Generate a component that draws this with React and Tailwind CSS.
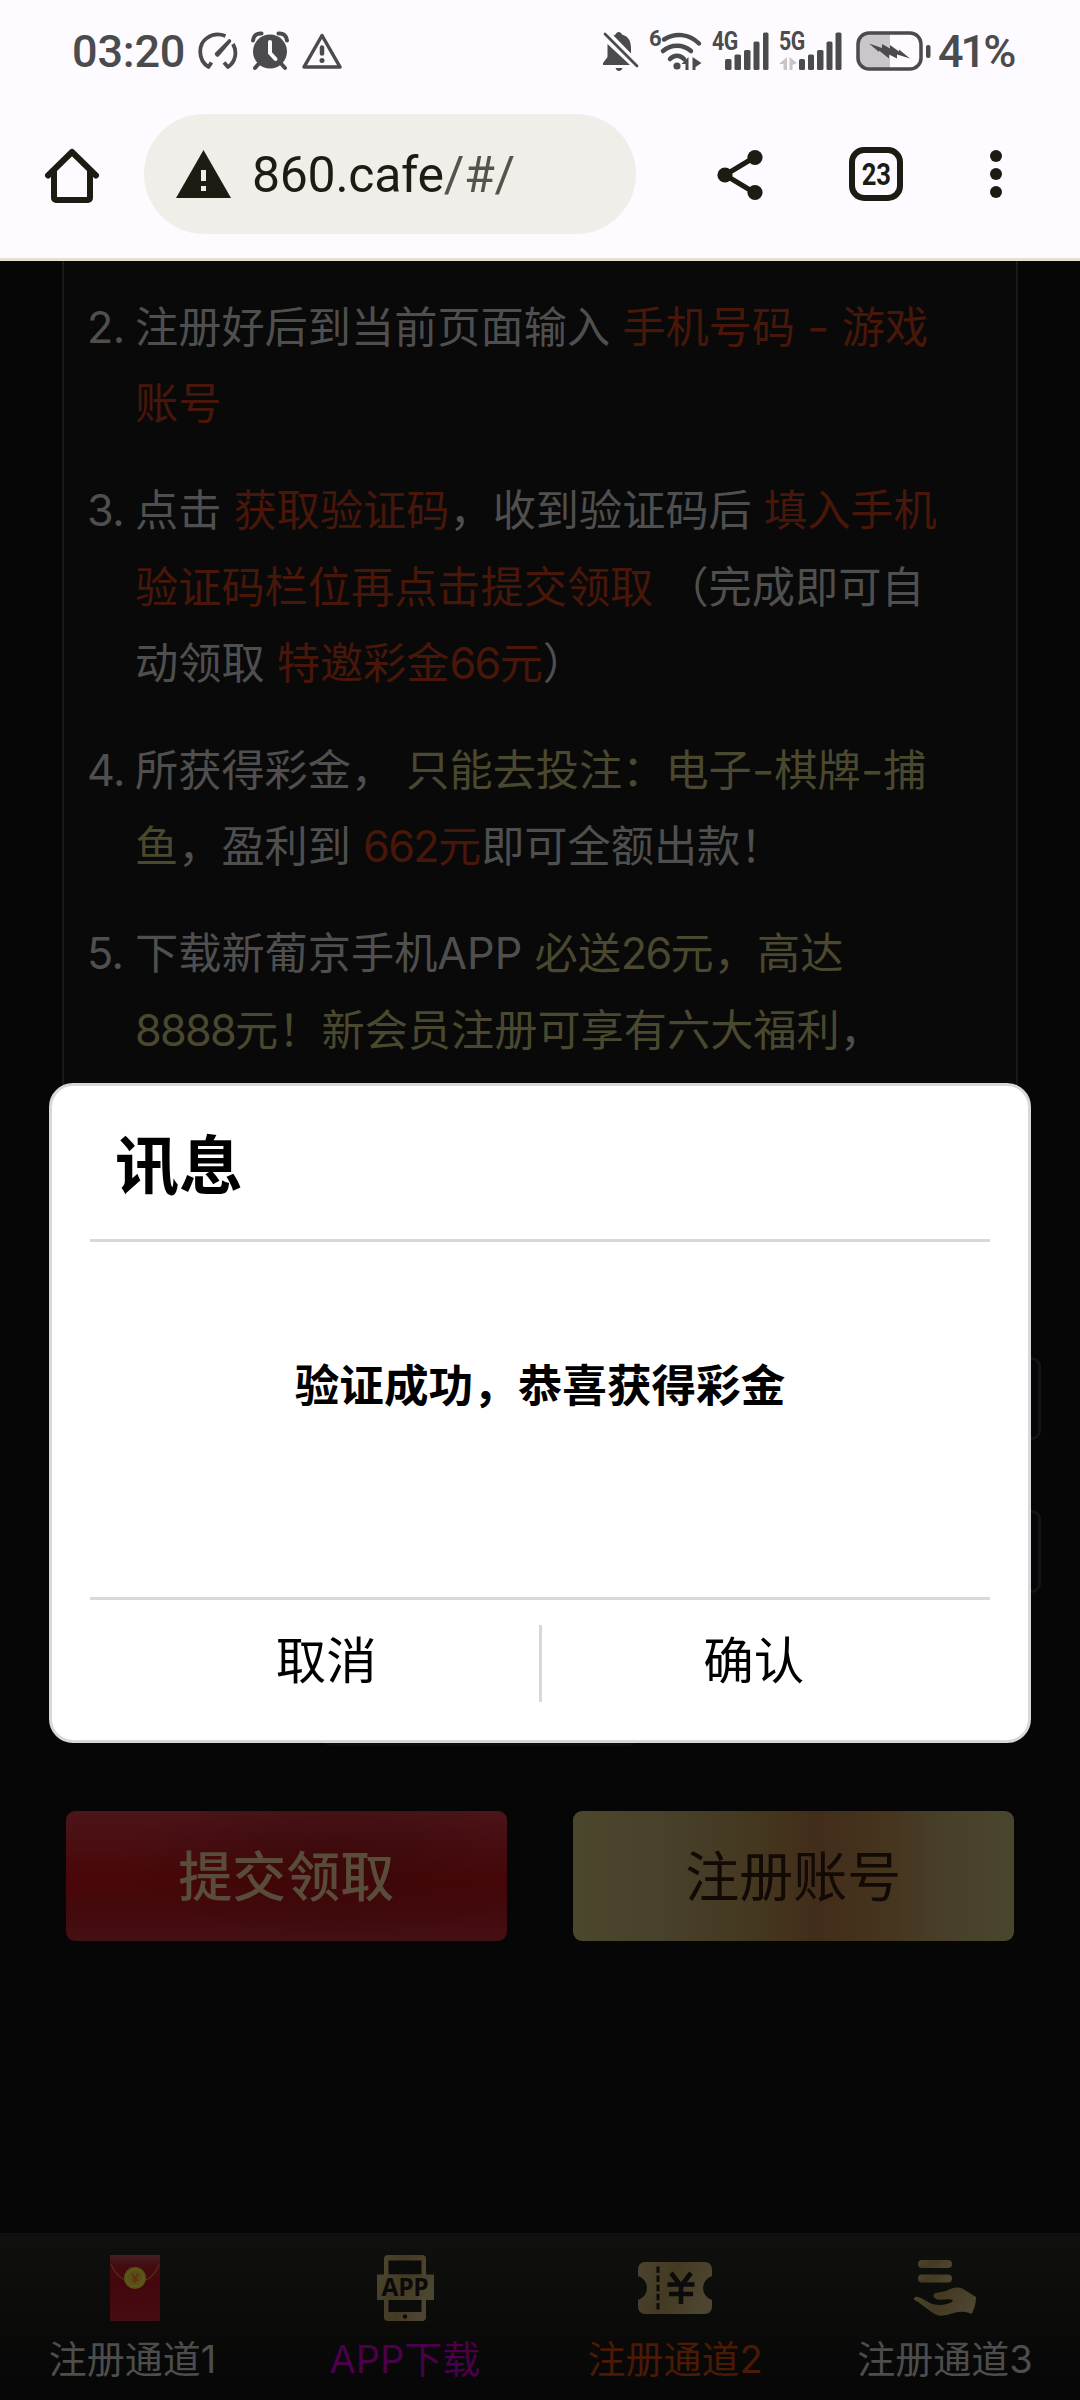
const G = ({ children }) => <span className="text-[#4f4f4f]">{children}</span>;
const R = ({ children }) => <span className="text-[#481709]">{children}</span>;
const Y = ({ children }) => <span className="text-[#4a482e]">{children}</span>;
const N = ({ children }) => <span className="tracking-[-1.7px]">{children}</span>;
const Dash = () => <span className="inline-block w-[22.500px] origin-center scale-x-[1.15] text-center">-</span>;

function StatusBar() {
  return (
    <div className="flex h-[102px] items-center justify-between pl-[72px] pr-[64px] text-[#4b4a4d]">
      <div className="flex items-center">
        <span className="w-[126px] whitespace-nowrap text-[45px] font-medium leading-none tracking-[-0.2px]">03:20</span>
        <svg width="40" height="38" viewBox="0 0 40 38" fill="none" stroke="currentColor" strokeWidth="3.800" strokeLinejoin="round">
          <path d="M13.500 30.500 10.500 35C-.5 28 0 12 9 6c5.500-4 12-4.500 18.500-2" />
          <path d="M35 12c4.500 8 2.500 18-5 23l-4-4.500" />
          <path d="M31.500 9 18.500 22l1 1z" fill="currentColor" strokeWidth="3.600" />
        </svg>
        <svg className="ml-[13px]" width="38" height="40" viewBox="0 0 38 40">
          <circle cx="19" cy="20.500" r="17" fill="currentColor" />
          <path d="M2 9.500C2.500 4.500 6 2 10.500 2.500M36 9.500C35.500 4.500 32 2 27.500 2.500M8 32.500l-4 4.500M30 32.500l4 4.500" fill="none" stroke="currentColor" strokeWidth="4" strokeLinecap="round" />
          <path d="M19 11v11l5.500 6" fill="none" stroke="#fdfbff" strokeWidth="4" strokeLinecap="round" />
        </svg>
        <svg className="ml-[13px]" width="40" height="38" viewBox="0 0 40 38" fill="none" stroke="currentColor">
          <path d="M20 3.500 38 35H2z" strokeWidth="3.500" strokeLinejoin="round" />
          <path d="M20 15.500v6" strokeWidth="4.500" strokeLinecap="round" />
          <circle cx="20" cy="28.500" r="2.500" fill="currentColor" stroke="none" />
        </svg>
      </div>
      <div className="flex items-center">
        <svg width="38" height="42" viewBox="0 0 38 42" fill="currentColor">
          <path d="M17 41c-2 0-3-1.500-3.500-3h7c-.5 1.500-1.500 3-3.500 3zM5.500 14v13L1 33v2h27zM11.500 5.500l2-1c1-3.500 5.500-3.500 6.500 0 7 2 9 7.500 9 13.500v5.500z" />
          <path d="M3 4l32 32" stroke="currentColor" strokeWidth="2.800" strokeLinecap="round" />
        </svg>
        <div className="relative ml-[9px] h-[42px] w-[54px]">
          <svg width="54" height="42" viewBox="0 0 54 42" fill="none" stroke="currentColor" strokeWidth="4.500" strokeLinecap="round">
            <path d="M15 9.500c11-7 25-6 35 4M14 21c8-7 20-7 28 0M21 29c4-4.500 10-4.500 14 0" />
            <circle cx="28" cy="36" r="3.600" fill="currentColor" stroke="none" />
            <path d="M39.500 27v13h-3v-6h-4zM43.500 27v13h3v-3l6-4z" fill="currentColor" stroke="none" />
          </svg>
          <span className="absolute left-0 top-[-4px] text-[22px] font-bold leading-[26px]">6</span>
        </div>
        <div className="relative ml-[9px] h-[42px] w-[58px]">
          <svg width="58" height="42" viewBox="0 0 58 42" fill="currentColor">
            <rect x="13" y="29" width="6.500" height="11" rx="1.500" /><rect x="22.500" y="24.500" width="6.500" height="15.500" rx="1.500" /><rect x="32" y="20" width="6.500" height="20" rx="1.500" /><rect x="41.500" y="11.500" width="6" height="28.500" rx="1.500" /><rect x="51" y="2.500" width="5.500" height="37.500" rx="1.500" />
          </svg>
          <span className="absolute left-0 top-[-3px] origin-left scale-x-[0.85] text-[25px] font-bold leading-[30px] tracking-[-0.5px]">4G</span>
        </div>
        <div className="relative ml-[9px] h-[42px] w-[66px]">
          <svg width="66" height="42" viewBox="0 0 66 42" fill="currentColor">
            <path d="M8 27v13H4.500v-6H0zM10.500 27v13h3v-5l4.500-2z" fill="#c8c5c9" />
            <rect x="20" y="29" width="6" height="11" rx="1.500" /><rect x="29" y="24.500" width="6" height="15.500" rx="1.500" /><rect x="38" y="20" width="6.500" height="20" rx="1.500" /><rect x="47.500" y="11.500" width="6" height="28.500" rx="1.500" /><rect x="56.500" y="2.500" width="6" height="37.500" rx="1.500" />
          </svg>
          <span className="absolute left-0 top-[-3px] origin-left scale-x-[0.85] text-[25px] font-bold leading-[30px] tracking-[-0.5px]">5G</span>
        </div>
        <svg className="ml-[11px]" width="76" height="40" viewBox="0 0 76 40">
          <path d="M34 3H14A11 11 0 0 0 3 14v12a11 11 0 0 0 11 11h20z" fill="#cac6cb" />
          <rect x="2" y="2" width="63" height="36" rx="11" fill="none" stroke="currentColor" strokeWidth="3.500" />
          <rect x="70" y="14" width="4.500" height="13" rx="2" fill="currentColor" />
          <path d="M13 12.500 26 17v-4l8 4.500v-3.500l9 6.500v-2l11 9-13-4v4l-8-4v4l-10-8v1.500z" fill="currentColor" />
        </svg>
        <span className="ml-[6px] w-[78px] whitespace-nowrap text-[45px] font-medium leading-none tracking-[-3px]">41%</span>
      </div>
    </div>
  );
}

function Toolbar() {
  return (
    <div className="flex h-[156px] items-start pt-[12px] text-[#1d1c13]">
      <svg className="ml-[43px] mt-[31px]" width="58" height="58" viewBox="0 0 58 58" fill="none" stroke="currentColor" strokeWidth="6" strokeLinejoin="round" strokeLinecap="round">
        <path d="M5 30.500 29 7l24 23.500" />
        <path d="M11 26v27a2 2 0 0 0 2 2h32a2 2 0 0 0 2-2V26" />
      </svg>
      <div className="ml-[43px] flex h-[120px] w-[492px] items-center rounded-full bg-[#f1eeea] pl-[32px]">
        <svg width="55" height="48" viewBox="0 0 55 48"><path d="M27.500 0 55 48H0z" fill="currentColor" /><path d="M25 20h5v11h-5zM25 36h5v5h-5z" fill="#f1eeea" /></svg>
        <span className="ml-[21px] whitespace-nowrap pt-[2px] text-[50px] leading-none tracking-[-0.3px]">860.cafe<span className="text-[#55534a]">/#/</span></span>
      </div>
      <svg className="ml-[81px] mt-[35px]" width="46" height="52" viewBox="0 0 46 52" fill="currentColor">
        <path d="M38 8 8 26l30 18" fill="none" stroke="currentColor" strokeWidth="5" /><circle cx="38" cy="8.500" r="7.600" /><circle cx="8" cy="26" r="7.600" /><circle cx="38" cy="43.500" r="7.600" />
      </svg>
      <div className="ml-[86px] mt-[33px] flex h-[54px] w-[54px] items-center justify-center rounded-[15px] border-[6px] border-current text-[32px] font-bold leading-none"><span className="scale-x-[0.8]">23</span></div>
      <div className="ml-[87px] mt-[36px] flex flex-col gap-[6px]">
        <i className="size-[12px] rounded-full bg-current" /><i className="size-[12px] rounded-full bg-current" /><i className="size-[12px] rounded-full bg-current" />
      </div>
    </div>
  );
}

function Item({ n, children }) {
  return (
    <li className="mb-[30.500px] flex">
      <span className="w-[48px] shrink-0 tracking-[-0.5px] text-[#4f4f4f]">{n}.</span>
      <div className="whitespace-nowrap">{children}</div>
    </li>
  );
}

function Rules() {
  return (
    <div className="mx-[62px] h-[900px] border-x-2 border-[#1a1a1a] bg-[#090909] pl-[23px] pt-[28px]">
      <ol className="text-[43.200px] leading-[76.400px] [font-family:Inter,'Noto_Sans_CJK_SC',sans-serif]">
        <Item n="2">
          <div><G>注册好后到当前页面输入 </G><R>手机号码 <Dash /> 游戏</R></div>
          <div><R>账号</R></div>
        </Item>
        <Item n="3">
          <div><G>点击 </G><R>获取验证码</R><G>，收到验证码后 </G><R>填入手机</R></div>
          <div><R>验证码栏位再点击提交领取 </R><G>（完成即可自</G></div>
          <div><G>动领取 </G><R>特邀彩金<N>66</N>元</R><G>）</G></div>
        </Item>
        <Item n="4">
          <div><G>所获得彩金， </G><Y>只能去投注：电子<Dash />棋牌<Dash />捕</Y></div>
          <div><Y>鱼</Y><G>，盈利到 </G><R><N>662</N>元</R><G>即可全额出款！</G></div>
        </Item>
        <Item n="5">
          <div><G>下载新葡京手机APP </G><Y>必送<N>26</N>元，高达</Y></div>
          <div><Y><N>8888</N>元！新会员注册可享有六大福利</Y><G>，</G></div>
        </Item>
      </ol>
    </div>
  );
}

function Form() {
  return (
    <div className="flex flex-col">
      <div className="ml-[321px] mr-[39px] mt-[196px] h-[83px] rounded-[9px] border-[3px] border-[#131415] bg-[#040609]" />
      <div className="ml-[321px] mr-[39px] mt-[70px] h-[83px] rounded-[9px] border-[3px] border-[#131415] bg-[#040609]" />
      <div className="ml-[321px] mt-[70px] h-[83px] w-[317px] rounded-[9px] bg-[#0c0f0d]" />
      <div className="mt-[65px] flex gap-[66px] px-[66px] text-[54px] [font-family:Inter,'Noto_Sans_CJK_SC',sans-serif]">
        <button className="h-[130px] w-[441px] rounded-[9px] bg-[radial-gradient(ellipse_50%_60%_at_62%_40%,rgba(50,8,10,0.600),transparent),linear-gradient(180deg,#4b151a_0%,#4a0d10_30%,#490608_52%,#43090c_75%,#441014_100%)] pt-[3px] font-medium text-[#5a4c3a]">提交领取</button>
        <button className="h-[130px] w-[442px] rounded-[9px] bg-[linear-gradient(90deg,#4b472c_0%,#48412b_20%,#44371f_42%,#422d1a_55%,#46351f_72%,#48402a_84%,#4a462d_100%)] pt-[3px] text-[#120a04]">注册账号</button>
      </div>
    </div>
  );
}

const Envelope = () => (
  <svg width="50" height="66" viewBox="0 0 50 66">
    <defs><linearGradient id="env" x1="0" y1="0" x2="0" y2="1"><stop offset="0" stopColor="#472022" /><stop offset=".15" stopColor="#430d12" /><stop offset=".4" stopColor="#43070d" /><stop offset="1" stopColor="#450c12" /></linearGradient></defs>
    <rect width="50" height="66" rx="1" fill="url(#env)" />
    <path d="M1 9c5 12 12 18 24 18S45 21 49 9" fill="none" stroke="#5b2a18" strokeWidth="1.200" />
    <circle cx="25" cy="23" r="11" fill="#595017" /><circle cx="25" cy="23" r="8.500" fill="none" stroke="#6a5f20" strokeWidth=".8" />
    <path d="m21.500 18.500 3.500 4.500 3.500-4.500M25 23v5M22 23.500h6M22 25.500h6" fill="none" stroke="#5e3312" strokeWidth="1.500" />
  </svg>
);

const PhoneApp = () => (
  <div className="relative h-[66px] w-[57px]">
    <svg width="57" height="66" viewBox="0 0 57 66">
      <rect x="7" width="42" height="66" rx="4" fill="url(#gold)" />
      <path d="M11.500 5.500h33v14h-33zM11.500 45h33v12h-33z" fill="#0b0b0b" />
      <rect y="19.500" width="57" height="25.500" fill="url(#gold)" />
      <circle cx="28" cy="61.500" r="2.200" fill="#0b0b0b" />
    </svg>
    <span className="absolute inset-x-0 top-[18px] text-center text-[24.500px] font-bold leading-[28px] tracking-[-0.3px] text-[#0b0b0b] [font-family:'Open_Sans',sans-serif]">APP</span>
  </div>
);

const Ticket = () => (
  <svg width="74" height="52" viewBox="0 0 74 52">
    <path d="M7 0h60a7 7 0 0 1 7 7v7a12.500 12.500 0 0 0 0 24v7a7 7 0 0 1-7 7H7a7 7 0 0 1-7-7v-7a12.500 12.500 0 0 0 0-24V7a7 7 0 0 1 7-7z" fill="url(#gold)" />
    <path d="M20 4.500V48" stroke="#0b0b0b" strokeWidth="3" strokeDasharray="6.500 2.600" />
    <path d="m33 11 10 13 10-13M29.500 22.500h27M31 32h24M43 22v20" fill="none" stroke="#0b0b0b" strokeWidth="4.600" />
  </svg>
);

const Hand = () => (
  <svg width="64" height="56" viewBox="0 0 64 56">
    <rect x="5" y="0" width="34" height="8" rx="4" fill="url(#gold)" /><rect x="5" y="14.500" width="34" height="8" rx="4" fill="url(#gold)" />
    <path d="M1 38c2-2.500 5-1 7 0l8 4.500c6 3 12 3 18 1.500 3-1 6-2.500 6-4-5-2-10 .5-15-.5-5-.8-6-5.500-2-6.500l10-2c7-3.500 12-5 18-1.500L63 37c0 6-1.500 12-4.500 17-9-4-15-1.500-23 .5-7 1.800-11 2-17-2.500L5 42c-3-2-5-2.500-4-4z" fill="url(#gold)" />
  </svg>
);

function NavItem({ icon, label, color }) {
  return (
    <div className="flex flex-1 flex-col items-center">
      <div className="flex h-[110px] items-center pb-[1px]">{icon}</div>
      <span className={"-mt-[9px] whitespace-nowrap text-[38px] leading-[50px] " + color}>{label}</span>
    </div>
  );
}

function BottomNav() {
  return (
    <nav className="mt-auto flex h-[167px] bg-[linear-gradient(180deg,#10100e,#060606)] [font-family:Inter,'Noto_Sans_CJK_SC',sans-serif]">
      <svg width="0" height="0" className="absolute"><defs><linearGradient id="gold" x1="0" y1="0" x2="1" y2=".3"><stop offset="0" stopColor="#4b442f" /><stop offset=".5" stopColor="#443a22" /><stop offset="1" stopColor="#4c4530" /></linearGradient></defs></svg>
      <NavItem icon={<Envelope />} label="注册通道1" color="pr-[5px]  text-[#4d4d4d]" />
      <NavItem icon={<PhoneApp />} label="APP下载" color="text-[#4a004a]" />
      <NavItem icon={<Ticket />} label="注册通道2" color="text-[#4a1a05]" />
      <NavItem icon={<Hand />} label="注册通道3" color="text-[#4d4d4d]" />
    </nav>
  );
}

function Dialog() {
  return (
    <div className="absolute left-[49px] top-[1083px] flex h-[660px] w-[982px] flex-col rounded-[24px] border-[3px] border-[#d8d8d8] bg-white px-[38px] text-black [font-family:Inter,'Noto_Sans_CJK_SC',sans-serif]">
      <h2 className="h-[153px] pl-[25px] text-[64px] font-bold leading-[160px]">讯息</h2>
      <hr className="border-t-[3px] border-[#d8d8d8]" />
      <p className="h-[355px] text-center text-[44.600px] font-bold leading-[289px]">验证成功，恭喜获得彩金</p>
      <hr className="border-t-[3px] border-[#d8d8d8]" />
      <div className="mx-[24px] mt-[25px] flex h-[77px] items-center text-[50.500px]">
        <button className="flex-1 pb-[4px] leading-none">取消</button>
        <i className="h-full w-[3px] bg-[#d8d8d8]" />
        <button className="flex-1 pb-[4px] leading-none">确认</button>
      </div>
    </div>
  );
}

export default function App() {
  return (
    <div className="relative flex h-[2400px] w-[1080px] flex-col overflow-hidden bg-[#060606] [font-family:Roboto,'Noto_Sans_CJK_SC',sans-serif]">
      <header className="h-[261px] shrink-0 border-b-[3px] border-[#e4e2cf] bg-[#fdfbff]">
        <StatusBar />
        <Toolbar />
      </header>
      <Rules />
      <Form />
      <BottomNav />
      <Dialog />
    </div>
  );
}
